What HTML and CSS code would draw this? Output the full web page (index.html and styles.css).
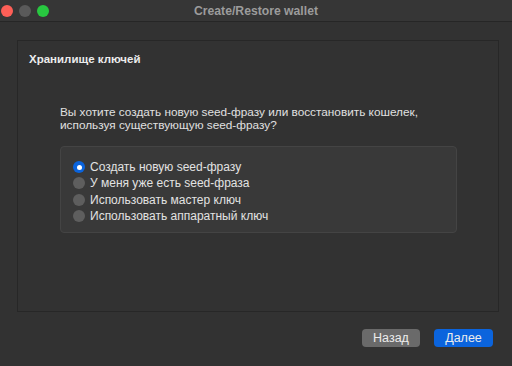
FILE: index.html
```html
<!DOCTYPE html>
<html lang="ru">
<head>
    <meta charset="UTF-8">
    <title>Create/Restore wallet</title>
    <link rel="stylesheet" href="styles.css">
</head>
<body>
    <div class="window">
        <div class="titlebar">
            <div class="lights">
                <span class="light red"></span>
                <span class="light grey"></span>
                <span class="light green"></span>
            </div>
            <div class="title">Create/Restore wallet</div>
        </div>

        <div class="panel">
            <div class="heading">Хранилище ключей</div>
            <p class="question">Вы хотите создать новую seed-фразу или восстановить кошелек,<br>используя существующую seed-фразу?</p>
            <div class="options">
                <label class="option"><span class="radio checked"></span>Создать новую seed-фразу</label>
                <label class="option"><span class="radio"></span>У меня уже есть seed-фраза</label>
                <label class="option"><span class="radio"></span>Использовать мастер ключ</label>
                <label class="option"><span class="radio"></span>Использовать аппаратный ключ</label>
            </div>
        </div>

        <div class="footer">
            <button class="btn btn-back">Назад</button>
            <button class="btn btn-next">Далее</button>
        </div>
    </div>
</body>
</html>
```

FILE: styles.css
```css
body {
    margin: 0;
    background: #323232;
    font-family: "Liberation Sans", Arial, sans-serif;
    color: #dcdcdc;
}
.window {
    width: 512px;
    height: 366px;
    display: flex;
    flex-direction: column;
}
.titlebar {
    height: 21px;
    position: relative;
    background: #363636;
    border-bottom: 1px solid #262626;
    display: flex;
    align-items: center;
    justify-content: center;
}
.lights {
    position: absolute;
    left: 1px;
    top: 5px;
    display: flex;
    gap: 6px;
}
.light {
    width: 12px;
    height: 12px;
    border-radius: 50%;
}
.red {
    background: #fe5f57;
}
.grey {
    background: #5a5a5a;
}
.green {
    background: #28c840;
}
.title {
    font-size: 12.2px;
    font-weight: bold;
    color: #9c9c9c;
    padding-top: 1px;
}
.panel {
    margin: 18px 13px 0 17px;
    height: 270px;
    border: 1px solid #272727;
    padding: 0 0 0 11px;
}
.heading {
    margin-top: 11px;
    font-size: 11.5px;
    line-height: 14px;
    font-weight: bold;
    color: #ececec;
}
.question {
    margin: 40px 0 0 31px;
    font-size: 11.8px;
    line-height: 13px;
    color: #e0e0e0;
}
.options {
    margin: 14px 0 0 31px;
    background: #393939;
    border: 1px solid #444444;
    border-radius: 4px;
    padding: 12px 0 0 12px;
    box-sizing: border-box;
    width: 397px;
    height: 87px;
}
.option {
    display: flex;
    align-items: center;
    height: 16.3px;
    font-size: 12px;
    color: #e2e2e2;
}
.radio {
    width: 12px;
    height: 12px;
    border-radius: 50%;
    background: #5e5e5e;
    margin-right: 5px;
    box-sizing: border-box;
}
.radio.checked {
    background: #0a63dc;
    position: relative;
}
.radio.checked:before {
    content: '';
    position: absolute;
    left: 3.5px;
    top: 3.5px;
    width: 5px;
    height: 5px;
    border-radius: 50%;
    background: #ffffff;
}
.footer {
    display: flex;
    justify-content: flex-end;
    gap: 14px;
    padding: 17px 19px 0 0;
}
.btn {
    height: 18px;
    border: none;
    border-radius: 4px;
    font-family: inherit;
    font-size: 12.5px;
    color: #ececec;
    padding: 0;
    width: 58px;
}
.btn-back {
    background: #6a6a6a;
}
.btn-next {
    background: #0b64dd;
    width: 59px;
}
```
